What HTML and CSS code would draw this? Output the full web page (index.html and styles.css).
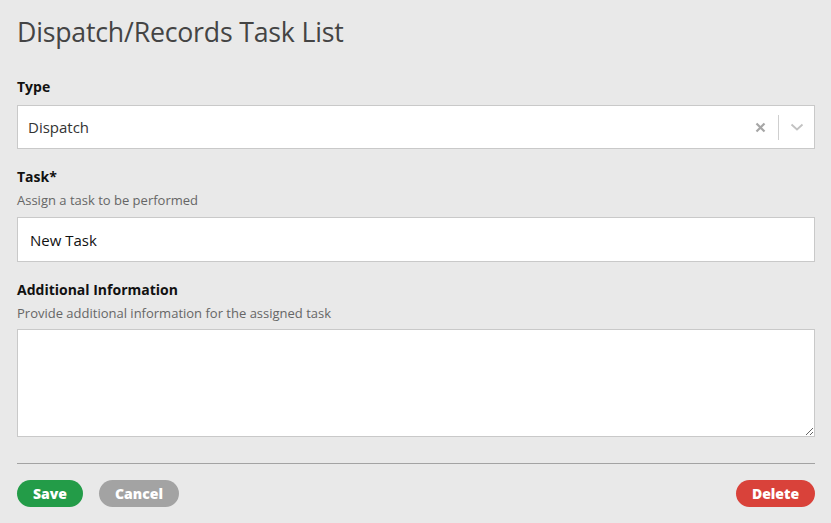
FILE: index.html
```html
<!DOCTYPE html>
<html lang="en">
<head>
<meta charset="utf-8">
<title>Dispatch/Records Task List</title>
<link rel="stylesheet" href="styles.css">
</head>
<body>
<main class="page">
  <h1 class="title">Dispatch/Records Task List</h1>

  <div class="field">
    <label class="label">Type</label>
    <div class="select">
      <span class="select-value">Dispatch</span>
      <span class="select-clear">
        <svg width="11" height="11" viewBox="0 0 11 11"><path d="M1.5 1.5 L9.5 9.5 M9.5 1.5 L1.5 9.5" stroke="#a6a6a6" stroke-width="2.2" fill="none"/></svg>
      </span>
      <span class="select-sep"></span>
      <span class="select-arrow">
        <svg width="14" height="8" viewBox="0 0 14 8"><path d="M1.5 1.5 L7 6.5 L12.5 1.5" stroke="#c2c2c2" stroke-width="1.8" fill="none"/></svg>
      </span>
    </div>
  </div>

  <div class="field">
    <label class="label">Task*</label>
    <div class="help">Assign a task to be performed</div>
    <input class="input" type="text" value="New Task">
  </div>

  <div class="field">
    <label class="label">Additional Information</label>
    <div class="help">Provide additional information for the assigned task</div>
    <textarea class="textarea"></textarea>
  </div>

  <hr class="rule">

  <div class="actions">
    <button class="btn btn-save">Save</button>
    <button class="btn btn-cancel">Cancel</button>
    <span class="spacer"></span>
    <button class="btn btn-delete">Delete</button>
  </div>
</main>
</body>
</html>
```
FILE: styles.css
```css
* { box-sizing: border-box; }
html, body {
  margin: 0;
  padding: 0;
  background: #e9e9e9;
}
body {
  font-family: "Open Sans", "Liberation Sans", sans-serif;
  color: #222;
}
.page {
  padding: 14px 16px 0 17px;
}
.title {
  margin: 0;
  font-size: 26.7px;
  line-height: 36px;
  font-weight: 400;
  color: #444;
  letter-spacing: -0.2px;
}
.field {
  display: flex;
  flex-direction: column;
}
.field:nth-of-type(1) { margin-top: 27px; }
.field + .field { margin-top: 18px; }
.label {
  font-size: 14px;
  line-height: 20px;
  font-weight: 700;
  color: #111;
}
.field > .label + .select { margin-top: 8px; }
.help {
  margin-top: 4px;
  font-size: 13px;
  line-height: 18px;
  color: #666;
}
.help + .input { margin-top: 8px; }
.help + .textarea { margin-top: 7px; }
.select {
  height: 44px;
  background: #fff;
  border: 1px solid #c9c9c9;
  display: flex;
  align-items: center;
  padding-left: 10px;
}
.select-value {
  flex: 1;
  font-size: 15px;
  color: #333;
}
.select-clear {
  display: flex;
  width: 20px;
  justify-content: center;
  margin-right: 8px;
}
.select-sep {
  width: 1px;
  height: 25px;
  background: #cfcfcf;
}
.select-arrow {
  display: flex;
  width: 35px;
  justify-content: center;
}
.input {
  height: 45px;
  background: #fff;
  border: 1px solid #c9c9c9;
  border-radius: 0;
  padding: 0 12px;
  font-family: inherit;
  font-size: 15px;
  color: #111;
  outline: none;
}
.textarea {
  height: 108px;
  background: #fff;
  border: 1px solid #c9c9c9;
  border-radius: 0;
  font-family: inherit;
  font-size: 15px;
  resize: vertical;
  outline: none;
}
.rule {
  margin: 26px 0 0;
  border: 0;
  border-top: 1px solid #a3a3a3;
  height: 0;
}
.actions {
  display: flex;
  align-items: center;
  gap: 16px;
  margin-top: 16px;
}
.spacer { flex: 1; }
.btn {
  height: 27px;
  border: 0;
  border-radius: 14px;
  font-family: inherit;
  font-size: 14px;
  font-weight: 800;
  color: #fff;
  padding: 0 15px;
  line-height: 27px;
}
.btn-save { background: #239c48; width: 66px; }
.btn-cancel { background: #a3a3a3; width: 80px; }
.btn-delete { background: #d9423a; width: 79px; }
```
